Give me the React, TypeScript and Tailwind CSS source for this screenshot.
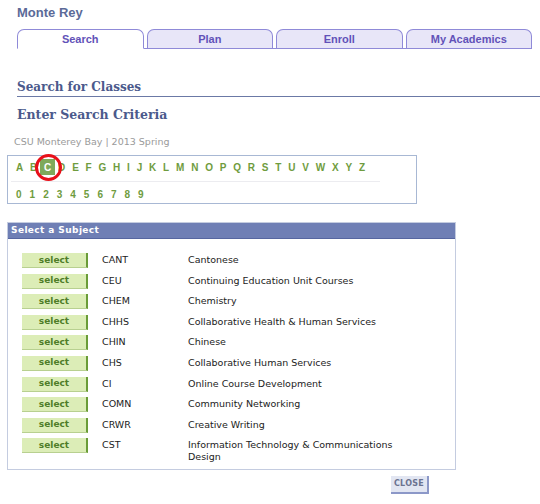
const tabs = ["Search", "Plan", "Enroll", "My Academics"];

const letters = "ABCDEFGHIJKLMNOPQRSTUVWXYZ".split("");
const digits = "0123456789".split("");

const subjects = [
  { code: "CANT", name: "Cantonese" },
  { code: "CEU", name: "Continuing Education Unit Courses" },
  { code: "CHEM", name: "Chemistry" },
  { code: "CHHS", name: "Collaborative Health & Human Services" },
  { code: "CHIN", name: "Chinese" },
  { code: "CHS", name: "Collaborative Human Services" },
  { code: "CI", name: "Online Course Development" },
  { code: "COMN", name: "Community Networking" },
  { code: "CRWR", name: "Creative Writing" },
  { code: "CST", name: "Information Technology & Communications Design" },
];

const verdana = "font-['DejaVu_Sans',Verdana,sans-serif]";
const arial = "font-['Liberation_Sans',Arial,sans-serif]";
const serif = "font-['DejaVu_Serif',Georgia,serif]";

export default function App() {
  return (
    <div className="w-[540px] h-[504px] bg-white overflow-hidden relative">
      <div className={`pl-[17px] pt-[3px] h-[29px] ${arial} text-[13px] font-bold text-[#5b6a98]`}>
        Monte Rey
      </div>

      {/* tabs */}
      <div className="ml-[17px] w-[515px] flex gap-[3px] border-b border-[#8f8ad8] h-[20px]">
        {tabs.map((t, i) => (
          <div
            key={t}
            className={`flex-1 rounded-t-[7px] border border-[#8f8ad8] flex items-center justify-center ${arial} text-[11px] font-bold text-[#6252b8] ${
              i === 0 ? "bg-white border-b-white -mb-px" : "bg-[#e8e6f8] border-b-0"
            }`}
          >
            {t}
          </div>
        ))}
      </div>

      <div className={`mt-[29px] ml-[17px] ${serif} text-[12px] font-bold text-[#4b5a8c] leading-[18px] border-b border-[#6b79a6]`}>
        Search for Classes
      </div>
      <div className={`mt-[8px] ml-[17px] ${serif} text-[12.5px] font-bold text-[#4b5a8c] leading-[20px]`}>
        Enter Search Criteria
      </div>

      <div className={`mt-[11px] ml-[14px] ${verdana} text-[9.5px] text-[#9a9a9a] leading-[12px]`}>
        CSU Monterey Bay | 2013 Spring
      </div>

      {/* letter box */}
      <div className="relative mt-[7px] ml-[7px] w-[410px] h-[49px] border border-[#a8b8d4] pl-[8px] pt-[3px]">
        <div className={`flex items-center gap-[6.8px] h-[16px] ${arial} text-[10px] font-bold text-[#6f9c3e]`}>
          {letters.map((l) =>
            l === "C" ? (
              <span key={l} className="bg-[#7fa95a] text-white px-[4px] -mx-[4px] h-[16px] flex items-center">
                {l}
              </span>
            ) : (
              <span key={l}>{l}</span>
            )
          )}
        </div>
        <div className="mt-[6px] -ml-[5px] w-[369px] h-px bg-[#ececf0]" />
        <div className={`mt-[6px] h-[12px] flex items-center gap-[8px] ${arial} text-[10px] font-bold text-[#6f9c3e]`}>
          {digits.map((d) => (
            <span key={d}>{d}</span>
          ))}
        </div>
        <div className="absolute left-[27px] top-[-2px] w-[27px] h-[27px] rounded-full border-[3px] border-[#e8101a]" />
      </div>

      {/* subject panel */}
      <div className="mt-[18px] ml-[7px] w-[449px] border border-[#c4cce0]">
        <div className={`h-[16px] bg-[#6f7fb5] border-b border-[#5666a0] px-[3px] flex items-center ${verdana} text-[9px] font-bold tracking-[0.4px] text-white`}>
          Select a Subject
        </div>
        <div className="pt-[14px] pb-[6px] pl-[14px] flex flex-col gap-[5.6px]">
          {subjects.map((s) => (
            <div key={s.code} className="flex items-start">
              <div className={`w-[66px] h-[15px] bg-[#dcedb7] border-r-2 border-b border-r-[#6a9c38] border-b-[#b8d090] flex items-center justify-center ${verdana} text-[9px] font-bold text-[#4f7d28] leading-none`}>
                select
              </div>
              <div className={`w-[100px] pl-[14px] ${verdana} text-[9.5px] text-[#222] leading-[14px]`}>{s.code}</div>
              <div className={`w-[220px] ${verdana} text-[9.5px] text-[#222] leading-[12px] pt-[1px]`}>{s.name}</div>
            </div>
          ))}
        </div>
      </div>

      <div className="mt-[6px] ml-[391px] w-[38px] h-[18px] bg-[#e2e6f2] border-r-2 border-b-2 border-[#8c98c8] flex items-center justify-center">
        <span className={`${verdana} text-[8px] font-bold text-[#6b7390] tracking-[0.3px]`}>CLOSE</span>
      </div>
    </div>
  );
}
